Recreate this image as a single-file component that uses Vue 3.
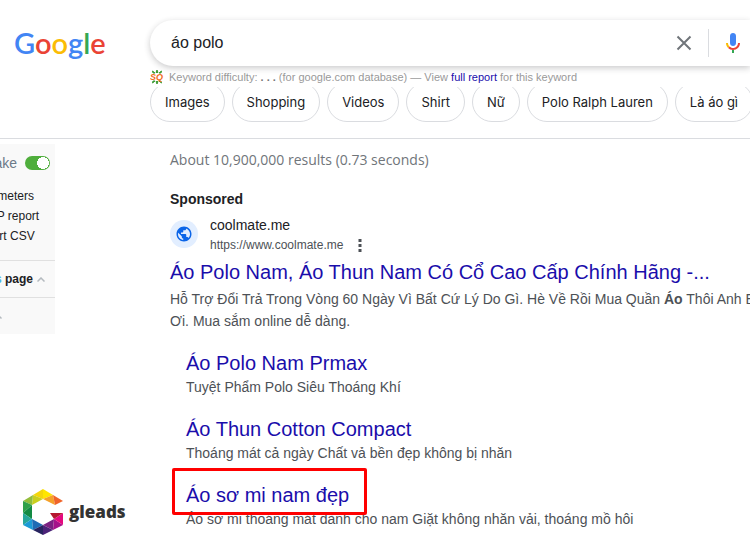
<script setup>
import { ref } from 'vue'

const query = ref('áo polo')
const logo = [
  ['G', 'blue'],
  ['o', 'red'],
  ['o', 'yellow'],
  ['g', 'blue'],
  ['l', 'green'],
  ['e', 'red'],
]
const chips = ['Images', 'Shopping', 'Videos', 'Shirt', 'Nữ', 'Polo Ralph Lauren', 'Là áo gì']
const tools = ['Parameters', 'SERP report', 'Export CSV']
const sitelinks = [
  { title: 'Áo Polo Nam Prmax', text: 'Tuyệt Phẩm Polo Siêu Thoáng Khí' },
  { title: 'Áo Thun Cotton Compact', text: 'Thoáng mát cả ngày Chất vả bền đẹp không bị nhăn' },
  {
    title: 'Áo sơ mi nam đẹp',
    text: 'Áo sơ mi thoáng mát dành cho nam Giặt không nhăn vải, thoáng mồ hôi',
    marked: true,
  },
]

// facets of the gleads hexagon
const facets = [
  ['20,0 10,6 20,10', '#f4d60b'],
  ['20,0 30,6 20,10', '#ffe600'],
  ['10,6 20,10 9,16', '#c9cf1f'],
  ['10,6 0,12 9,16', '#93bd3b'],
  ['30,6 20,10 32,16', '#f5a12b'],
  ['30,6 40,12 32,16', '#f0642a'],
  ['0,12 9,16 0,24', '#2fa04a'],
  ['9,16 0,24 9,30', '#138a43'],
  ['0,24 9,30 0,36', '#26a69a'],
  ['0,36 9,30 10,41', '#1c9ad6'],
  ['9,30 20,36 10,41', '#1f6bb5'],
  ['10,41 20,36 20,46', '#27245f'],
  ['20,36 30,41 20,46', '#4b2378'],
  ['20,36 31,30 30,41', '#7b2182'],
  ['31,30 40,36 30,41', '#a5128a'],
  ['31,30 40,24 40,36', '#e5097f'],
  ['27,24 40,24 31,30', '#b5172f'],
]
</script>

<template>
  <div class="page">
    <header class="header">
      <a class="google" href="#" aria-label="Google">
        <span v-for="([letter, color], i) in logo" :key="i" :class="color">{{ letter }}</span>
      </a>
      <div class="search-area">
        <form class="search" @submit.prevent>
          <input v-model="query" type="text" aria-label="Search" />
          <button type="button" class="clear" aria-label="Clear" @click="query = ''">
            <svg viewBox="0 0 16 16" width="16" height="16">
              <path d="M1.5 1.5 14.5 14.5 M14.5 1.5 1.5 14.5" stroke="#70757a" stroke-width="2" />
            </svg>
          </button>
          <button type="button" class="mic" aria-label="Search by voice">
            <svg viewBox="0 0 24 24" width="24" height="24">
              <path fill="#4285f4" d="M12 15c1.7 0 3-1.3 3-3V5c0-1.7-1.3-3-3-3S9 3.3 9 5v7c0 1.7 1.3 3 3 3z" />
              <path fill="#34a853" d="M11 18.9h2V22h-2z" />
              <path fill="#fbbc04" d="M7 12H5c0 1.9.8 3.7 2.1 5l1.4-1.4C7.6 14.6 7 13.4 7 12z" />
              <path fill="#ea4335" d="M12 17c-1.4 0-2.6-.6-3.5-1.5L7.1 17c1.2 1.2 3 2 4.9 2 3.9 0 7-3.1 7-7h-2c0 2.8-2.2 5-5 5z" />
            </svg>
          </button>
        </form>
        <p class="keyword">
          <svg viewBox="0 0 14 14" width="14" height="14">
            <path
              d="M7 0 8 2.5H6z M2.5 1 5 3H3z M11.5 1 11 3H9z M7 14 8 11.5H6z M2.5 13 3 11h2z M11.5 13 9 11h2z"
              fill="#3f9c35"
              stroke="#3f9c35"
            />
            <text x="0" y="10" class="sq">SQ</text>
          </svg>
          <span>
            Keyword difficulty: <b class="dots">. . .</b> (for google.com database) — View
            <a href="#">full report</a> for this keyword
          </span>
        </p>
        <nav class="chips">
          <a v-for="chip in chips" :key="chip" href="#">{{ chip }}</a>
        </nav>
      </div>
    </header>

    <div class="body">
      <aside class="side">
        <div class="panel">
          <label class="toggle">
            <span>ake</span>
            <input type="checkbox" checked />
          </label>
          <ul class="tools">
            <li v-for="tool in tools" :key="tool">{{ tool }}</li>
          </ul>
          <button type="button" class="row">
            <span><i>s</i> page</span>
            <svg viewBox="0 0 8 5" width="8" height="5">
              <path d="M.5 4.5 4 1l3.5 3.5" fill="none" stroke="#b4babf" stroke-width="1.5" />
            </svg>
          </button>
          <div class="row last">
            <svg viewBox="0 0 8 5" width="8" height="5">
              <path d="M.5 4.5 4 1l3.5 3.5" fill="none" stroke="#b4babf" stroke-width="1.5" />
            </svg>
          </div>
        </div>
      </aside>

      <main class="results">
        <p class="stats">About 10,900,000 results (0.73 seconds)</p>
        <p class="sponsored">Sponsored</p>
        <div class="site">
          <span class="favicon">
            <svg viewBox="0 0 24 24" width="18" height="18">
              <path
                fill="#0b65e8"
                d="M12 2C6.48 2 2 6.48 2 12s4.48 10 10 10 10-4.48 10-10S17.52 2 12 2zm-1 17.93c-3.95-.49-7-3.85-7-7.93 0-.62.08-1.21.21-1.79L9 15v1c0 1.1.9 2 2 2v1.93zm6.9-2.54c-.26-.81-1-1.39-1.9-1.39h-1v-3c0-.55-.45-1-1-1H8v-2h2c.55 0 1-.45 1-1V7h2c1.1 0 2-.9 2-2v-.41c2.93 1.19 5 4.06 5 7.41 0 2.08-.8 3.97-2.1 5.39z"
              />
            </svg>
          </span>
          <div>
            <p class="name">coolmate.me</p>
            <p class="url">
              https://www.coolmate.me
              <button type="button" aria-label="About this result">
                <svg viewBox="0 0 4 14" width="4" height="14">
                  <path d="M.5 1h3v3h-3z M.5 6h3v3h-3z M.5 11h3v3h-3z" fill="#4d5156" />
                </svg>
              </button>
            </p>
          </div>
        </div>
        <h3><a href="#">Áo Polo Nam, Áo Thun Nam Có Cổ Cao Cấp Chính Hãng -...</a></h3>
        <p class="text">
          Hỗ Trợ Đổi Trả Trong Vòng 60 Ngày Vì Bất Cứ Lý Do Gì. Hè Về Rồi Mua Quần <b>Áo</b> Thôi Anh Em<br />
          Ơi. Mua sắm online dễ dàng.
        </p>
        <ul class="sitelinks">
          <li v-for="item in sitelinks" :key="item.title">
            <h3 :class="{ marked: item.marked }"><a href="#">{{ item.title }}</a></h3>
            <p class="text">{{ item.text }}</p>
          </li>
        </ul>
      </main>
    </div>

    <div class="watermark">
      <svg viewBox="0 0 40 46" width="40" height="46">
        <polygon v-for="[points, color] in facets" :key="points" :points="points" :fill="color" />
      </svg>
      <span>gleads</span>
    </div>
  </div>
</template>

<style>
body {
  margin: 0;
  background: #fff;
  overflow: hidden;
}
</style>

<style scoped>
.page {
  position: relative;
  min-height: 100vh;
  overflow: hidden;
  font-family: 'Liberation Sans', Arial, sans-serif;
  font-size: 14px;
  color: #202124;
}

p,
h3,
ul {
  margin: 0;
  padding: 0;
  list-style: none;
}

a {
  color: #1a0dab;
  text-decoration: none;
}

button {
  padding: 0;
  border: 0;
  background: none;
  font: inherit;
  cursor: pointer;
}

svg {
  display: block;
  flex: none;
}

.header {
  display: flex;
  padding: 20px 0 16px;
  border-bottom: 1px solid #dadce0;
}

.google {
  flex: none;
  box-sizing: border-box;
  width: 150px;
  padding-left: 14px;
  font: 600 29px/46px Lato, sans-serif;
}

.blue {
  color: #4285f4;
}

.red {
  color: #ea4335;
}

.yellow {
  color: #fbbc05;
}

.green {
  color: #34a853;
}

.search-area {
  flex: 1;
  min-width: 0;
}

.search {
  display: flex;
  align-items: center;
  height: 46px;
  border-radius: 23px 0 0 23px;
  box-shadow: 0 2px 6px rgba(32, 33, 36, 0.24);
}

.search input {
  flex: 1;
  min-width: 0;
  padding: 0 0 0 21px;
  border: 0;
  outline: 0;
  background: none;
  font: 16px 'Liberation Sans', Arial, sans-serif;
  color: #202124;
}

.clear {
  padding-right: 16px;
}

.mic {
  padding: 2px 5px 2px 12px;
  border-left: 1px solid #dadce0;
}

.keyword {
  display: flex;
  align-items: center;
  gap: 5px;
  height: 21px;
  font-size: 11px;
  white-space: nowrap;
  color: #999;
}

.sq {
  font: italic bold 9px 'Liberation Sans', Arial, sans-serif;
  fill: #f26b21;
}

.dots {
  color: #777;
}

.chips {
  display: flex;
  gap: 7px;
  height: 35px;
  align-items: flex-end;
  overflow: hidden;
}

.chips a {
  flex: none;
  padding: 0 14px;
  border: 1px solid #dadce0;
  border-radius: 20px;
  font: 13px/38px Inter, sans-serif;
  white-space: nowrap;
  color: #202124;
}

.body {
  display: flex;
}

.side {
  flex: none;
  width: 55px;
  margin: 5px 115px 0 0;
  overflow: hidden;
}

.panel {
  margin-left: -28px;
  background: #f9f9f9;
  font-size: 12px;
}

.toggle {
  display: flex;
  align-items: center;
  justify-content: flex-end;
  gap: 8px;
  height: 38px;
  padding-right: 5px;
  font-size: 14px;
  color: #6c7a89;
}

.toggle input {
  appearance: none;
  box-sizing: border-box;
  width: 25px;
  height: 14px;
  margin: 0;
  border-radius: 7px;
  background: radial-gradient(circle at 18px 7px, #fff 6px, #4fae3c 6px);
}

.tools {
  padding: 4px 0 14px;
  line-height: 20px;
}

.row {
  display: flex;
  align-items: center;
  justify-content: flex-end;
  gap: 4px;
  box-sizing: border-box;
  width: 100%;
  height: 37px;
  padding-right: 10px;
  border-top: 1px solid #e0e0e0;
  font-weight: bold;
  color: #202124;
}

.row i {
  font-style: normal;
  color: #4db5e8;
}

.last {
  padding-right: 53px;
}

.results {
  flex: 1;
  min-width: 0;
  padding-top: 10px;
}

.stats {
  font: 14px/22px 'Open Sans', sans-serif;
  white-space: nowrap;
  color: #70757a;
}

.sponsored {
  margin-top: 17px;
  font-weight: bold;
  line-height: 22px;
}

.site {
  display: flex;
  gap: 12px;
  margin-top: 5px;
}

.favicon {
  display: grid;
  place-items: center;
  width: 28px;
  height: 28px;
  margin-top: 5px;
  border-radius: 50%;
  background: #e2eeff;
}

.name {
  line-height: 20px;
}

.url {
  display: flex;
  align-items: center;
  gap: 15px;
  font-size: 12px;
  line-height: 20px;
  color: #4d5156;
}

h3 {
  font-size: 20px;
  font-weight: normal;
  line-height: 26px;
  white-space: nowrap;
}

.site + h3 {
  margin-top: 4px;
}

.text {
  margin-top: 3px;
  line-height: 22px;
  white-space: nowrap;
  color: #4d5156;
}

.sitelinks {
  display: grid;
  gap: 18px;
  margin: 18px 0 0 16px;
}

.sitelinks .text {
  margin-top: 0;
}

.marked {
  position: relative;
  width: fit-content;
}

/* red highlight frame drawn over the result */
.marked::after {
  content: '';
  position: absolute;
  inset: -14px -18px -7px -14px;
  border: 3px solid #f00;
  border-radius: 2px;
  pointer-events: none;
}

.watermark {
  position: absolute;
  left: 23px;
  bottom: 22px;
  display: flex;
  align-items: center;
  gap: 6px;
  font: 800 17px/20px 'Open Sans', sans-serif;
  color: #333;
}
</style>
